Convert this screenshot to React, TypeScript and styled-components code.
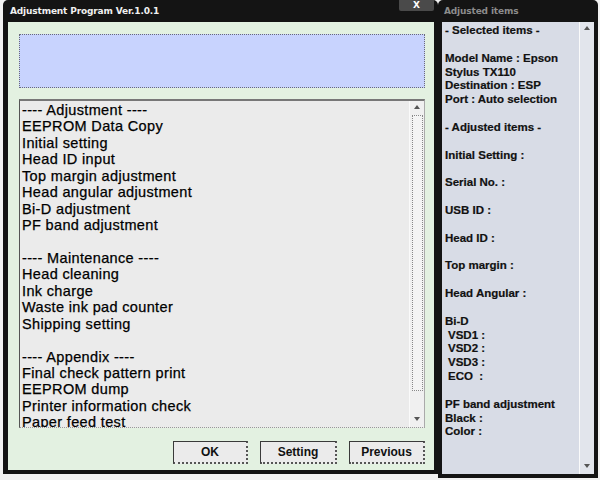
import React from "react";
import styled, { createGlobalStyle } from "styled-components";

const GlobalStyle = createGlobalStyle`
  html, body {
    margin: 0;
    padding: 0;
    background: #f2f2f2;
    font-family: "Liberation Sans", Arial, sans-serif;
  }
`;

const Desktop = styled.div`
  display: flex;
  align-items: flex-start;
  width: 600px;
  height: 480px;
  padding: 0 2px 0 3px;
  box-sizing: border-box;
`;

const Window = styled.div<{ $w: number; $h: number }>`
  display: flex;
  flex-direction: column;
  width: ${(p) => p.$w}px;
  height: ${(p) => p.$h}px;
  background-color: #141414;
  background-image: radial-gradient(#2e2e2e 0.6px, transparent 0.7px);
  background-size: 2px 2px;
  border-radius: 5px 5px 0 0;
  box-sizing: border-box;
  padding: 0 4px 4px 5px;
`;

const TitleBar = styled.div`
  display: flex;
  align-items: flex-start;
  height: 22px;
  flex: none;
`;

const Title = styled.span<{ $dim?: boolean }>`
  font-family: "DejaVu Sans", Verdana, sans-serif;
  font-weight: bold;
  font-size: 9px;
  letter-spacing: -0.15px;
  color: ${(p) => (p.$dim ? "#8c8c8c" : "#f0f0f0")};
  padding: 6px 0 0 ${(p) => (p.$dim ? 1 : 2)}px;
`;

const CloseButton = styled.div`
  margin-left: auto;
  width: 35px;
  height: 11px;
  background: #4a4a4a;
  color: #fff;
  font-family: "DejaVu Sans", sans-serif;
  font-weight: bold;
  font-size: 9px;
  line-height: 11px;
  text-align: center;
  border-radius: 0 0 2px 2px;
`;

const MainBody = styled.div`
  flex: 1;
  display: flex;
  flex-direction: column;
  background: #e3f1e1;
  padding: 12px 9px 0 11px;
`;

const InfoBox = styled.div`
  height: 54px;
  background: #c8d3fe;
  border: 1px dotted #6a6a7a;
  box-sizing: border-box;
  margin-bottom: 11px;
`;

const ListBox = styled.div`
  height: 329px;
  display: flex;
  background: #ebebeb;
  border-top: 2px solid #777;
  border-left: 1px solid #555;
  border-right: 1px solid #aaa;
  border-bottom: 1px dotted #999;
  box-sizing: border-box;
  overflow: hidden;
`;

const ListItems = styled.div`
  flex: 1;
  padding: 1px 0 0 2px;
  font-size: 14.5px;
  letter-spacing: 0.35px;
  line-height: 16.45px;
  color: #000;
  -webkit-text-stroke: 0.25px #000;
`;

const Line = styled.div`
  height: 16.45px;
  white-space: nowrap;
`;

const ScrollTrack = styled.div<{ $bg: string }>`
  width: 15px;
  flex: none;
  display: flex;
  flex-direction: column;
  align-items: center;
  background: ${(p) => p.$bg};
  border-left: 1px solid #fafafa;
  padding: 4px 0 6px;
  box-sizing: border-box;
`;

const Arrow = styled.div<{ $up?: boolean }>`
  width: 0;
  height: 0;
  border-left: 3px solid transparent;
  border-right: 3px solid transparent;
  ${(p) =>
    p.$up
      ? "border-bottom: 4px solid #555;"
      : "border-top: 4px solid #555;"}
  flex: none;
`;

const Thumb = styled.div<{ $h: number }>`
  width: 11px;
  height: ${(p) => p.$h}px;
  margin: 6px 0 auto;
  border: 1px dotted #888;
  box-sizing: border-box;
  background: #f4f4f4;
`;

const Spacer = styled.div`
  flex: 1;
`;

const ButtonRow = styled.div`
  display: flex;
  justify-content: flex-end;
  gap: 12px;
  padding: 13px 0 0;
`;

const Button = styled.button<{ $w: number }>`
  width: ${(p) => p.$w}px;
  height: 23px;
  background: #ebebeb;
  border: 1px solid #3a3a3a;
  border-right: 2px dotted #555;
  border-bottom: 2px dotted #555;
  font-family: "Liberation Sans", Arial, sans-serif;
  font-weight: bold;
  font-size: 12px;
  color: #111;
  padding: 0;
`;

const SideBody = styled.div`
  flex: 1;
  display: flex;
  background: #d8dce6;
  margin-left: -1px;
`;

const SideText = styled.div`
  flex: 1;
  padding: 2px 0 0 3px;
  font-weight: bold;
  font-size: 11.5px;
  line-height: 13.85px;
  color: #111;
  -webkit-text-stroke: 0.2px #111;
`;

const SideLine = styled.div<{ $indent?: boolean }>`
  height: 13.85px;
  white-space: pre;
  padding-left: ${(p) => (p.$indent ? 3 : 0)}px;
`;

const mainLines = [
  "---- Adjustment ----",
  "EEPROM Data Copy",
  "Initial setting",
  "Head ID input",
  "Top margin adjustment",
  "Head angular adjustment",
  "Bi-D adjustment",
  "PF band adjustment",
  "",
  "---- Maintenance ----",
  "Head cleaning",
  "Ink charge",
  "Waste ink pad counter",
  "Shipping setting",
  "",
  "---- Appendix ----",
  "Final check pattern print",
  "EEPROM dump",
  "Printer information check",
  "Paper feed test",
];

const sideLines: [string, boolean?][] = [
  ["- Selected items -"],
  [""],
  ["Model Name : Epson"],
  ["Stylus TX110"],
  ["Destination : ESP"],
  ["Port : Auto selection"],
  [""],
  ["- Adjusted items -"],
  [""],
  ["Initial Setting :"],
  [""],
  ["Serial No. :"],
  [""],
  ["USB ID :"],
  [""],
  ["Head ID :"],
  [""],
  ["Top margin :"],
  [""],
  ["Head Angular :"],
  [""],
  ["Bi-D"],
  ["VSD1 :", true],
  ["VSD2 :", true],
  ["VSD3 :", true],
  ["ECO  :", true],
  [""],
  ["PF band adjustment"],
  ["Black :"],
  ["Color :"],
];

export default function App() {
  return (
    <>
      <GlobalStyle />
      <Desktop>
        <Window $w={435} $h={474}>
          <TitleBar>
            <Title>Adjustment Program Ver.1.0.1</Title>
            <CloseButton>X</CloseButton>
          </TitleBar>
          <MainBody>
            <InfoBox />
            <ListBox>
              <ListItems>
                {mainLines.map((l, i) => (
                  <Line key={i}>{l}</Line>
                ))}
              </ListItems>
              <ScrollTrack $bg="#f0f0f0">
                <Arrow $up />
                <Thumb $h={276} />
                <Arrow />
              </ScrollTrack>
            </ListBox>
            <ButtonRow>
              <Button $w={75}>OK</Button>
              <Button $w={77}>Setting</Button>
              <Button $w={76}>Previous</Button>
            </ButtonRow>
            <Spacer />
          </MainBody>
        </Window>
        <Window $w={160} $h={478}>
          <TitleBar>
            <Title $dim>Adjusted items</Title>
          </TitleBar>
          <SideBody>
            <SideText>
              {sideLines.map(([t, indent], i) => (
                <SideLine key={i} $indent={indent}>
                  {t}
                </SideLine>
              ))}
            </SideText>
            <ScrollTrack $bg="#e2e5ec">
              <Arrow $up />
              <Spacer />
              <Arrow />
            </ScrollTrack>
          </SideBody>
        </Window>
      </Desktop>
    </>
  );
}
